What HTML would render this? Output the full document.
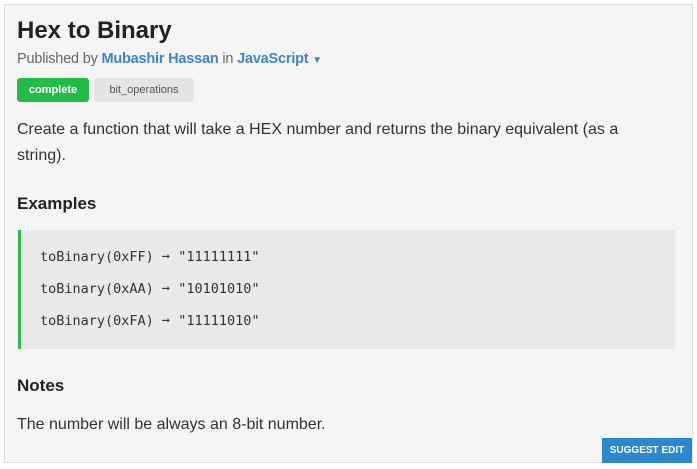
<!DOCTYPE html>
<html><head><style>
body{margin:0;width:697px;height:469px;background:#fff;font-family:"Liberation Sans",sans-serif;position:relative;overflow:hidden}
.panel{position:absolute;left:4px;top:4px;width:687px;height:457px;background:#f5f5f5;border:1px solid #ddd}
.a{position:absolute;white-space:nowrap}
h1{position:absolute;left:17px;top:17px;margin:0;font-size:24px;font-weight:bold;color:#222}
.by{left:17px;top:51px;font-size:14.5px;color:#666;letter-spacing:-0.2px}
.by b{color:#3b86c8}
.tag{position:absolute;top:78px;height:24px;border-radius:3px;font-size:11px;line-height:24px;text-align:center}
.p{left:17px;font-size:16px;color:#333}
.h{left:17px;font-size:17px;font-weight:bold;color:#222}
.code{position:absolute;left:18px;top:230px;width:654px;height:119px;background:#e9e9e9;border-left:3px solid #2cbc4c}
.c{left:40px;font-family:"DejaVu Sans Mono","Liberation Mono",monospace;font-size:13.5px;color:#333}
.btn{position:absolute;left:602px;top:438px;width:90px;height:25px;background:#2a87d0;color:#fff;font-size:10px;font-weight:bold;text-align:center;line-height:25px}
</style></head><body>
<div class="panel"></div>
<h1>Hex to Binary</h1>
<div class="a by">Published by <b>Mubashir Hassan</b> in <b>JavaScript</b> <span style="color:#3b86c8;font-size:10px">&#9660;</span></div>
<div class="tag" style="left:17px;width:72px;background:#22bb46;color:#fff;font-weight:bold">complete</div>
<div class="tag" style="left:94px;width:100px;background:#e5e5e5;color:#555">bit_operations</div>
<div class="a p" style="top:121px">Create a function that will take a HEX number and returns the binary equivalent (as a</div>
<div class="a p" style="top:147px">string).</div>
<div class="a h" style="top:194px">Examples</div>
<div class="code"></div>
<div class="a c" style="top:249px">toBinary(0xFF) <b>➞</b> "11111111"</div>
<div class="a c" style="top:281px">toBinary(0xAA) <b>➞</b> "10101010"</div>
<div class="a c" style="top:313px">toBinary(0xFA) <b>➞</b> "11111010"</div>
<div class="a h" style="top:376px">Notes</div>
<div class="a p" style="top:416px">The number will be always an 8-bit number.</div>
<div class="btn">SUGGEST EDIT</div>
</body></html>
